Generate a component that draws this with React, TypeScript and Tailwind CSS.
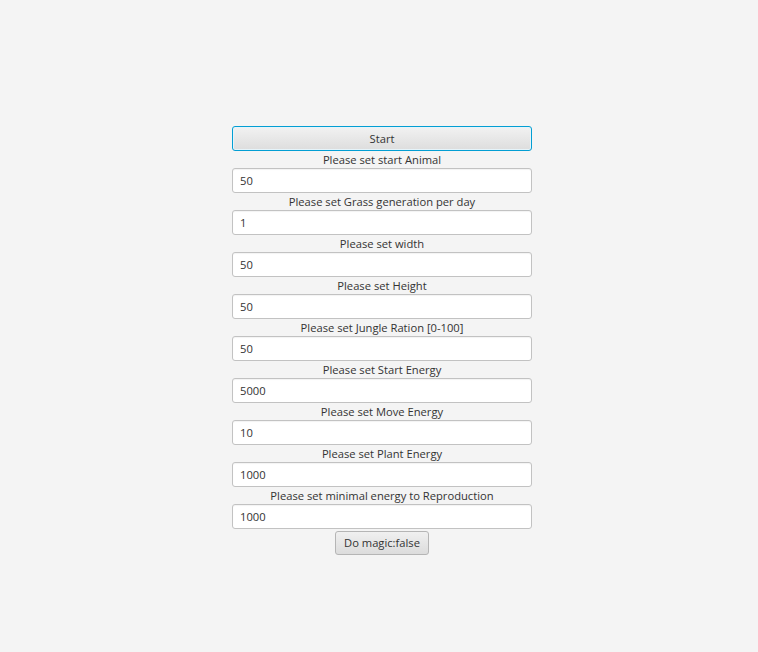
const fields: { label: string; value: string }[] = [
  { label: "Please set start Animal", value: "50" },
  { label: "Please set Grass generation per day", value: "1" },
  { label: "Please set width", value: "50" },
  { label: "Please set Height", value: "50" },
  { label: "Please set Jungle Ration [0-100]", value: "50" },
  { label: "Please set Start Energy", value: "5000" },
  { label: "Please set Move Energy", value: "10" },
  { label: "Please set Plant Energy", value: "1000" },
  { label: "Please set minimal energy to Reproduction", value: "1000" },
];

export default function App() {
  return (
    <main className="min-h-[652px] w-full bg-[#f4f4f4] pt-[126px] pl-[232px] font-['Open_Sans',sans-serif] text-[11.2px] text-[#333333]">
      <div className="flex w-[300px] flex-col items-center">
        <button className="h-[25px] w-full rounded-[3px] border border-[#039ed3] bg-gradient-to-b from-[#f2f2f2] to-[#dddddd] leading-none text-[#333333] shadow-[inset_0_0_0_1px_#e6f4fa]">
          Start
        </button>
        {fields.map((f) => (
          <div key={f.label} className="flex w-full flex-col items-center">
            <div className="flex h-[17px] items-center leading-none">{f.label}</div>
            <input
              readOnly
              value={f.value}
              className="h-[25px] w-full rounded-[3px] border border-[#c2c2c2] bg-white px-[7px] text-[11.2px] text-[#333333] shadow-[inset_0_1px_1px_rgba(0,0,0,0.05)] outline-none"
            />
          </div>
        ))}
        <button className="mt-[2px] h-[24px] w-[94px] rounded-[3px] border border-[#b5b5b5] bg-gradient-to-b from-[#f0f0f0] to-[#dcdcdc] leading-none text-[#333333]">
          Do magic:false
        </button>
      </div>
    </main>
  );
}
